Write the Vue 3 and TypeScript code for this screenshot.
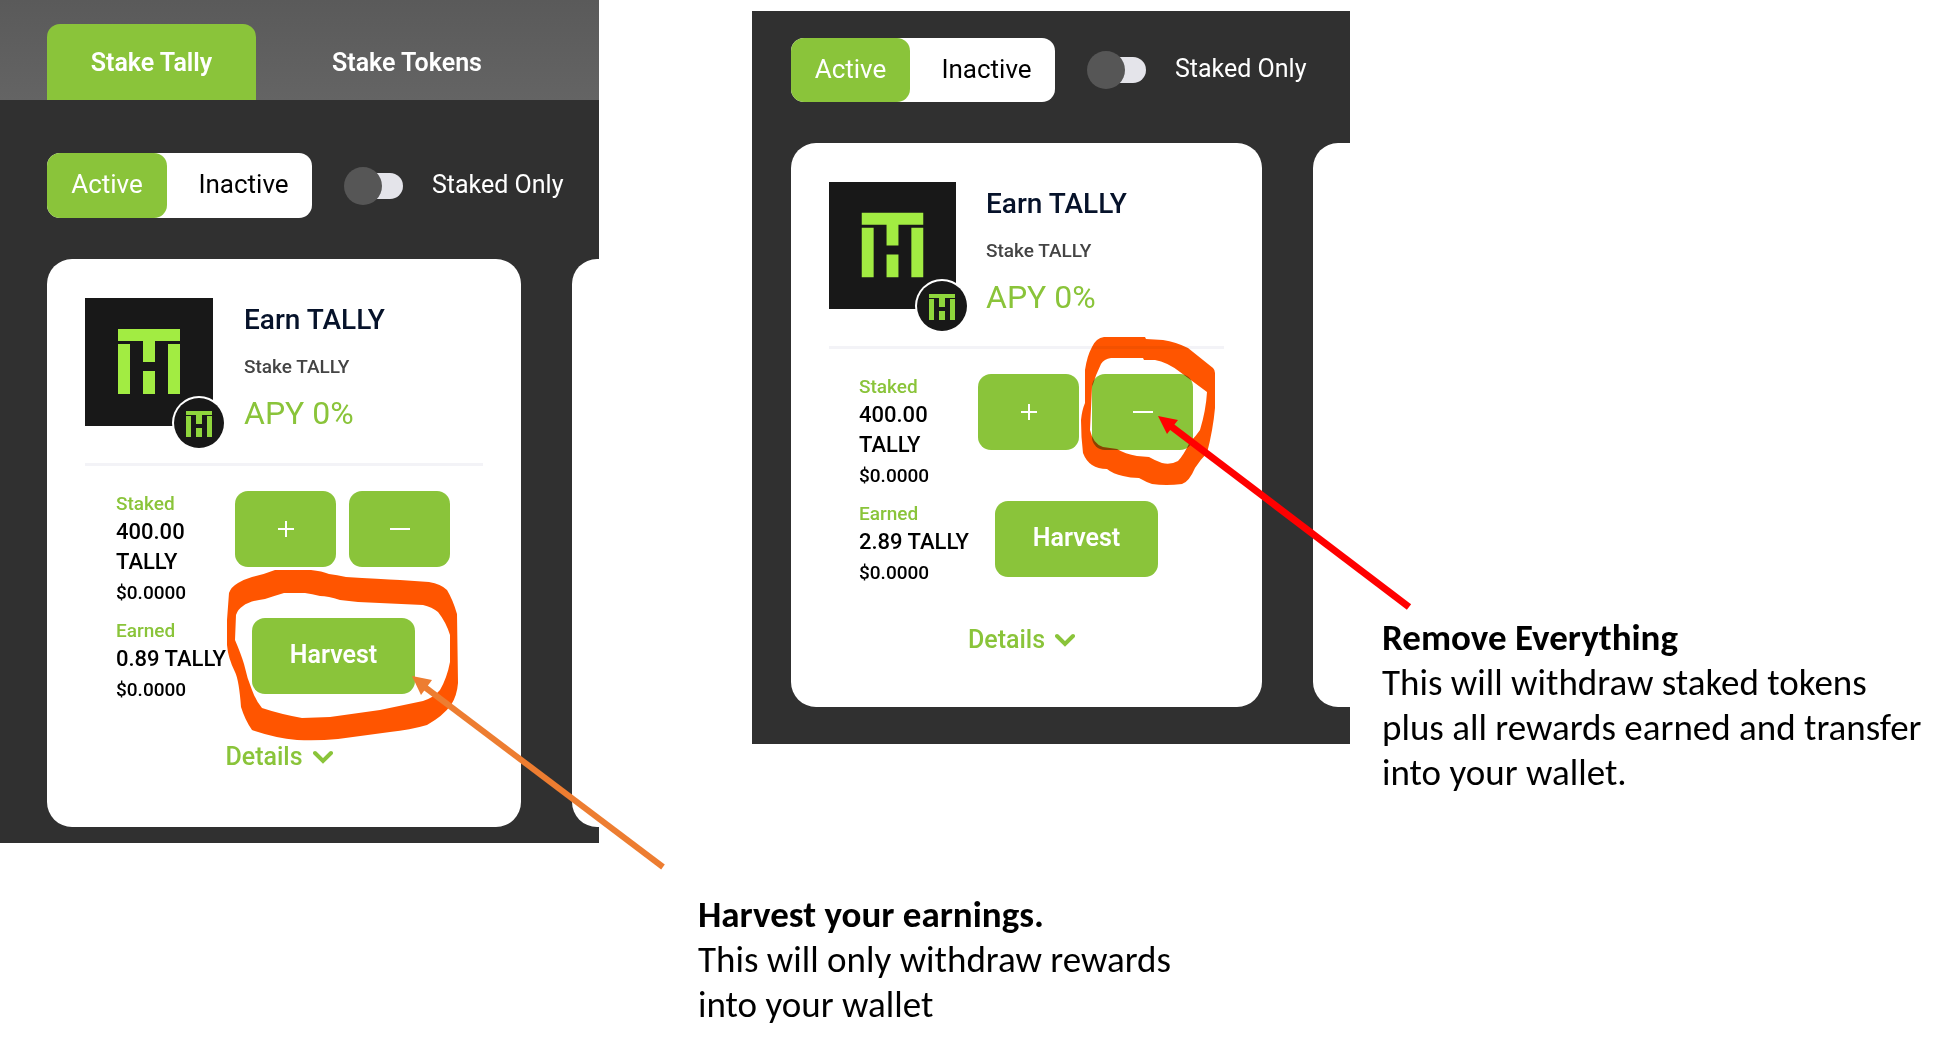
<script setup lang="ts">
import { ref } from 'vue'

interface Shot {
  id: string
  tabs: string[]
  earned: string
}

const shots: Shot[] = [
  { id: 'harvest', tabs: ['Stake Tally', 'Stake Tokens'], earned: '0.89 TALLY' },
  { id: 'remove', tabs: [], earned: '2.89 TALLY' },
]

const stakedOnly = ref<Record<string, boolean>>({ harvest: false, remove: false })
</script>

<template>
  <main class="page">
    <div class="guide">
      <div class="shots">
        <section v-for="shot in shots" :key="shot.id" class="shot" :class="`shot-${shot.id}`">
          <nav v-if="shot.tabs.length" class="tabs">
            <button
              v-for="(tab, i) in shot.tabs"
              :key="tab"
              type="button"
              class="tab"
              :class="{ current: i === 0 }"
            >{{ tab }}</button>
          </nav>

          <div class="pool">
            <div class="filters">
              <div class="segment">
                <button type="button" class="seg on">Active</button>
                <button type="button" class="seg">Inactive</button>
              </div>
              <label class="only">
                <input v-model="stakedOnly[shot.id]" type="checkbox" class="switch" />
                <span>Staked Only</span>
              </label>
            </div>

            <div class="cards">
              <article class="card">
                <header class="head">
                  <div class="logo">
                    <svg class="logo-main" viewBox="0 0 128 128" aria-hidden="true">
                      <rect width="128" height="128" fill="#181818" />
                      <g fill="#a2ec42">
                        <path d="M33 31h62v12H70v21H58V43H33z" />
                        <path d="M33 46h12v50H33zM58 73h12v23H58zM83 46h12v50H83z" />
                      </g>
                    </svg>
                    <svg class="logo-badge" viewBox="0 0 54 54" aria-hidden="true">
                      <circle cx="27" cy="27" r="27" fill="#fff" />
                      <circle cx="27" cy="27" r="25" fill="#181818" />
                      <g fill="#8fd63c">
                        <path d="M14 15h26v4H30v9h-6v-9H14z" />
                        <path d="M14 20h5v21h-5zM24 32h6v9h-6zM35 20h5v21h-5z" />
                      </g>
                    </svg>
                  </div>
                  <div class="title">
                    <h2>Earn TALLY</h2>
                    <p class="sub">Stake TALLY</p>
                    <p class="apy">APY 0%</p>
                  </div>
                </header>

                <div class="row">
                  <div class="stat">
                    <span class="label">Staked</span>
                    <span class="value">400.00 TALLY</span>
                    <span class="usd">$0.0000</span>
                  </div>
                  <div class="actions">
                    <button type="button" class="btn" aria-label="Stake more">
                      <svg width="20" height="20" viewBox="0 0 20 20"><path d="M2 10h16M10 2v16" /></svg>
                    </button>
                    <button type="button" class="btn" aria-label="Unstake">
                      <svg width="20" height="20" viewBox="0 0 20 20"><path d="M0 10h20" /></svg>
                    </button>
                  </div>
                </div>

                <div class="row">
                  <div class="stat">
                    <span class="label">Earned</span>
                    <span class="value">{{ shot.earned }}</span>
                    <span class="usd">$0.0000</span>
                  </div>
                  <button type="button" class="btn wide">Harvest</button>
                </div>

                <button type="button" class="details">
                  Details
                  <svg width="20" height="14" viewBox="0 0 20 14" aria-hidden="true">
                    <path d="M2 3l8 8 8-8" />
                  </svg>
                </button>
              </article>
              <article class="card"></article>
            </div>
          </div>

          <template v-if="shot.id === 'harvest'">
            <svg class="ink marker" width="599" height="843" viewBox="0 0 599 843" aria-hidden="true">
              <path
                d="M275 570L311 570Q322 571 329 574Q337 575 346 577Q380 579 400 580L429 582Q441 584 447 590Q453 600 457 614L458 683Q457 696 451 705Q443 716 427 725Q410 730 390 732L338 739Q318 741 297 740Q275 738 252 730Q245 720 241 707Q239 680 235 672Q228 658 227 645L227 620L229 593Q231 587 238 583Q245 579 252 577Q262 575 275 570Z
                   M284 593L305 593Q312 594 320 596Q328 596 340 600L358 602L423 605Q432 607 438 612Q446 622 450 635L450 662Q447 678 440 690Q433 698 423 701L380 710L330 717L302 718Q280 714 262 708Q256 701 252 690Q247 678 244 664Q241 654 235 640L236 615Q238 609 243 606Q249 601 265 599Q274 596 284 593Z"
              />
            </svg>
            <svg class="ink" width="599" height="843" viewBox="0 0 599 843" aria-hidden="true">
              <path d="M422 685L663 867" stroke="#ed7d31" stroke-width="6" />
              <path d="M412 676L432 680L421 695Z" fill="#ed7d31" />
            </svg>
          </template>
          <template v-else>
            <svg class="ink marker" width="598" height="733" viewBox="752 11 598 733" aria-hidden="true">
              <path
                d="M1104 337L1145 337L1146 339L1163 340Q1176 342 1188 348L1213 368Q1215 370 1215 373L1215 408Q1213 430 1207 453Q1200 460 1195 468Q1189 482 1182 484Q1166 486 1152 484Q1146 482 1139 478Q1130 478 1123 476Q1113 474 1107 469Q1098 469 1092 465Q1086 461 1083 453Q1081 437 1081 420Q1082 410 1085 403L1085 370Q1087 356 1092 347Q1096 338 1104 337Z
                   M1111 358L1143 358L1144 360L1155 360Q1167 362 1180 372L1207 392Q1206 410 1200 430Q1196 436 1190 442Q1183 456 1178 461Q1171 465 1162 463Q1154 460 1149 457L1137 456Q1125 454 1117 449L1103 447Q1093 444 1090 430L1092 387Q1096 374 1101 364Q1104 359 1111 358Z"
              />
            </svg>
            <svg class="ink" width="598" height="733" viewBox="752 11 598 733" aria-hidden="true">
              <path d="M1168 424L1409 607" stroke="#f00" stroke-width="7" />
              <path d="M1158 416L1178 420L1167 434Z" fill="#f00" />
            </svg>
          </template>
        </section>
      </div>

      <div class="note note-harvest">
        <h3>Harvest your earnings.</h3>
        <p>This will only withdraw rewards<br />into your wallet</p>
      </div>
    </div>

    <div class="note note-remove">
      <h3>Remove Everything</h3>
      <p>This will withdraw staked tokens<br />plus all rewards earned and transfer<br />into your wallet.</p>
    </div>
  </main>
</template>

<style>
body {
  margin: 0;
  background: #fff;
}
</style>

<style scoped>
.page {
  display: grid;
  grid-template-columns: 1350fr 603fr;
  font-family: Roboto, 'Liberation Sans', sans-serif;
  overflow: hidden;
}

button {
  font: inherit;
  border: 0;
  padding: 0;
  cursor: pointer;
}

h2,
h3,
p {
  margin: 0;
}

.shots {
  display: grid;
  grid-template-columns: 599fr 598fr;
  column-gap: 153px;
  align-items: start;
}

.shot {
  --logo: 128px;
  --inset: 31px;
  --bar: 65px;
  --card: 474px;
  --seg: 120px;
  --rule-gap: 32px;
  position: relative;
  min-width: 0;
  background: #303030;
}

.shot-remove {
  --logo: 127px;
  --inset: 30px;
  --bar: 64px;
  --card: 471px;
  --seg: 119px;
  --rule-gap: 31px;
  margin-top: 11px;
}

.tabs {
  display: flex;
  height: 76px;
  padding: 24px 0 0 47px;
  background: linear-gradient(#5a5a5a, #646464);
}

.tab {
  width: 209px;
  border-radius: 13px 13px 0 0;
  background: transparent;
  color: #fff;
  font-size: 25px;
  font-weight: 600;
}

.tab + .tab {
  width: 302px;
}

.tab.current {
  background: #8ac43a;
}

.pool {
  padding: 53px 0 16px 47px;
  overflow: hidden;
}

.shot-remove .pool {
  padding: 27px 0 37px 39px;
}

.filters {
  display: flex;
  align-items: center;
  gap: 32px;
  margin-bottom: 41px;
}

.segment {
  display: flex;
  height: var(--bar);
  border-radius: 13px;
  background: #fff;
}

.seg {
  width: var(--seg);
  padding-bottom: 3px;
  border-radius: 13px;
  background: transparent;
  color: #000;
  font-size: 26px;
}

.seg + .seg {
  width: 145px;
  padding-left: 8px;
}

.seg.on {
  background: #8ac43a;
  color: #fff;
}

.only {
  display: flex;
  align-items: center;
  gap: 29px;
  color: #fff;
  font-size: 25px;
}

.only span {
  padding-bottom: 3px;
  white-space: nowrap;
}

.switch {
  appearance: none;
  position: relative;
  width: 59px;
  height: 26px;
  margin: 0;
  border-radius: 13px;
  background: linear-gradient(90deg, transparent 12px, #e4e4ea 12px);
}

.switch::before {
  content: '';
  position: absolute;
  top: -6px;
  left: 0;
  width: 38px;
  height: 38px;
  border-radius: 50%;
  background: #565656;
}

.switch:checked::before {
  left: 21px;
}

.cards {
  display: flex;
  gap: 51px;
  width: 598px;
}

.card {
  flex: 0 0 var(--card);
  box-sizing: border-box;
  min-height: 564px;
  padding: 39px 38px;
  border-radius: 25px;
  background: #fff;
}

.shot-harvest .card {
  min-height: 568px;
}

.head {
  display: flex;
  gap: var(--inset);
  padding-bottom: var(--rule-gap);
  margin-bottom: 25px;
  border-bottom: 3px solid #f3f3f7;
}

.logo {
  position: relative;
  height: var(--logo);
}

.logo-main {
  display: block;
  width: var(--logo);
  height: var(--logo);
}

.logo-badge {
  position: absolute;
  right: -13px;
  bottom: -24px;
  width: 54px;
  height: 54px;
}

.title {
  display: flex;
  flex-direction: column;
}

.title h2 {
  color: #06122a;
  font-size: 28px;
  font-weight: 500;
  line-height: 43px;
}

.sub {
  margin-top: 8px;
  color: #444;
  font-size: 19px;
  font-weight: 500;
  line-height: 36px;
}

.apy {
  margin-top: 10px;
  color: #8ac43a;
  font-size: 32px;
  line-height: 36px;
}

.row {
  display: flex;
  align-items: flex-start;
  min-height: 76px;
  margin-bottom: 10px;
  padding-left: var(--inset);
}

.stat {
  display: flex;
  flex-direction: column;
  width: 119px;
  color: #000;
}

.label {
  color: #8ac43a;
  font-size: 19px;
  font-weight: 500;
  line-height: 26px;
}

.value {
  font-size: 22px;
  font-weight: 500;
  line-height: 30px;
}

.usd {
  font-size: 19px;
  font-weight: 500;
  line-height: 31px;
}

.actions {
  display: flex;
  gap: 13px;
}

.btn {
  display: flex;
  flex: none;
  align-items: center;
  justify-content: center;
  width: 101px;
  height: 76px;
  border-radius: 13px;
  background: #8ac43a;
  color: #fff;
  font-size: 25px;
  font-weight: 600;
}

.btn path {
  fill: none;
  stroke: #fff;
  stroke-width: 2;
}

.wide {
  width: 163px;
  margin-left: 17px;
  padding-bottom: 4px;
}

.details {
  display: flex;
  align-items: center;
  gap: 10px;
  margin: 37px auto 0;
  padding-right: 10px;
  background: transparent;
  color: #8ac43a;
  font-size: 25px;
  font-weight: 500;
}

.details path {
  fill: none;
  stroke: #8ac43a;
  stroke-width: 4;
  stroke-linecap: round;
}

.ink {
  position: absolute;
  top: 0;
  left: 0;
  overflow: visible;
  pointer-events: none;
}

.marker {
  fill: #ff5500;
  fill-rule: evenodd;
  mix-blend-mode: multiply;
}

.note {
  color: #000;
  font-family: Carlito, Calibri, 'Open Sans', sans-serif;
  font-size: 37px;
  line-height: 45px;
  white-space: nowrap;
}

.note h3 {
  font-size: inherit;
}

.note-harvest {
  margin: 49px 0 0 698px;
}

.note-remove {
  padding: 615px 0 0 32px;
}
</style>
